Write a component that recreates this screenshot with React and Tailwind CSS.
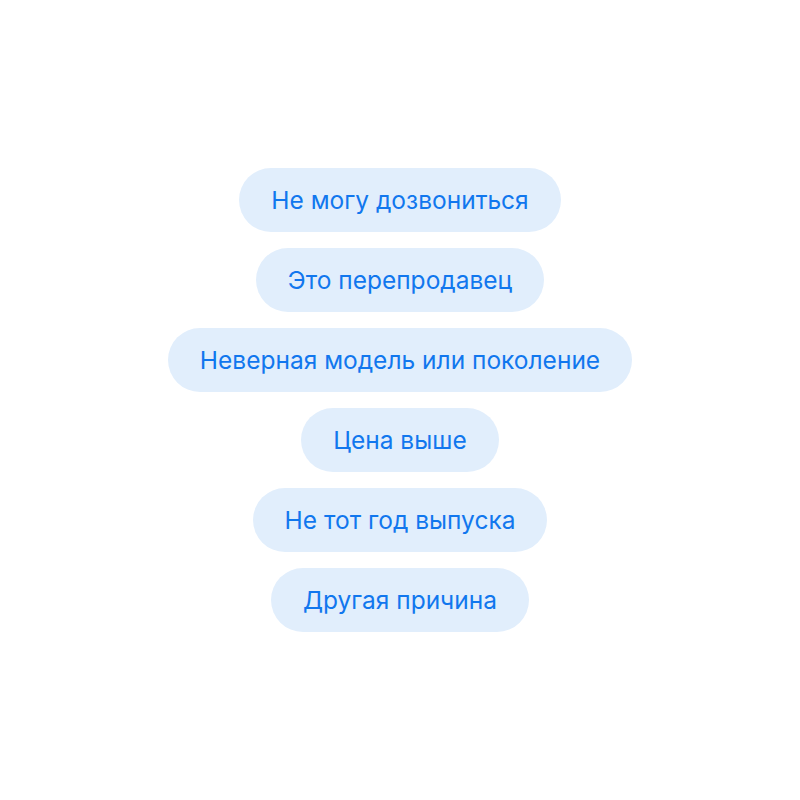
const reasons = [
  "Не могу дозвониться",
  "Это перепродавец",
  "Неверная модель или поколение",
  "Цена выше",
  "Не тот год выпуска",
  "Другая причина",
];

export default function App() {
  return (
    <div className="min-h-screen w-full bg-white flex items-center justify-center font-['Inter',sans-serif]">
      <div className="flex flex-col items-center gap-4">
        {reasons.map((r) => (
          <button
            key={r}
            className="h-16 px-8 rounded-full bg-[#e1eefc] text-[#1177ee] text-[24.5px] leading-none"
          >
            {r}
          </button>
        ))}
      </div>
    </div>
  );
}
